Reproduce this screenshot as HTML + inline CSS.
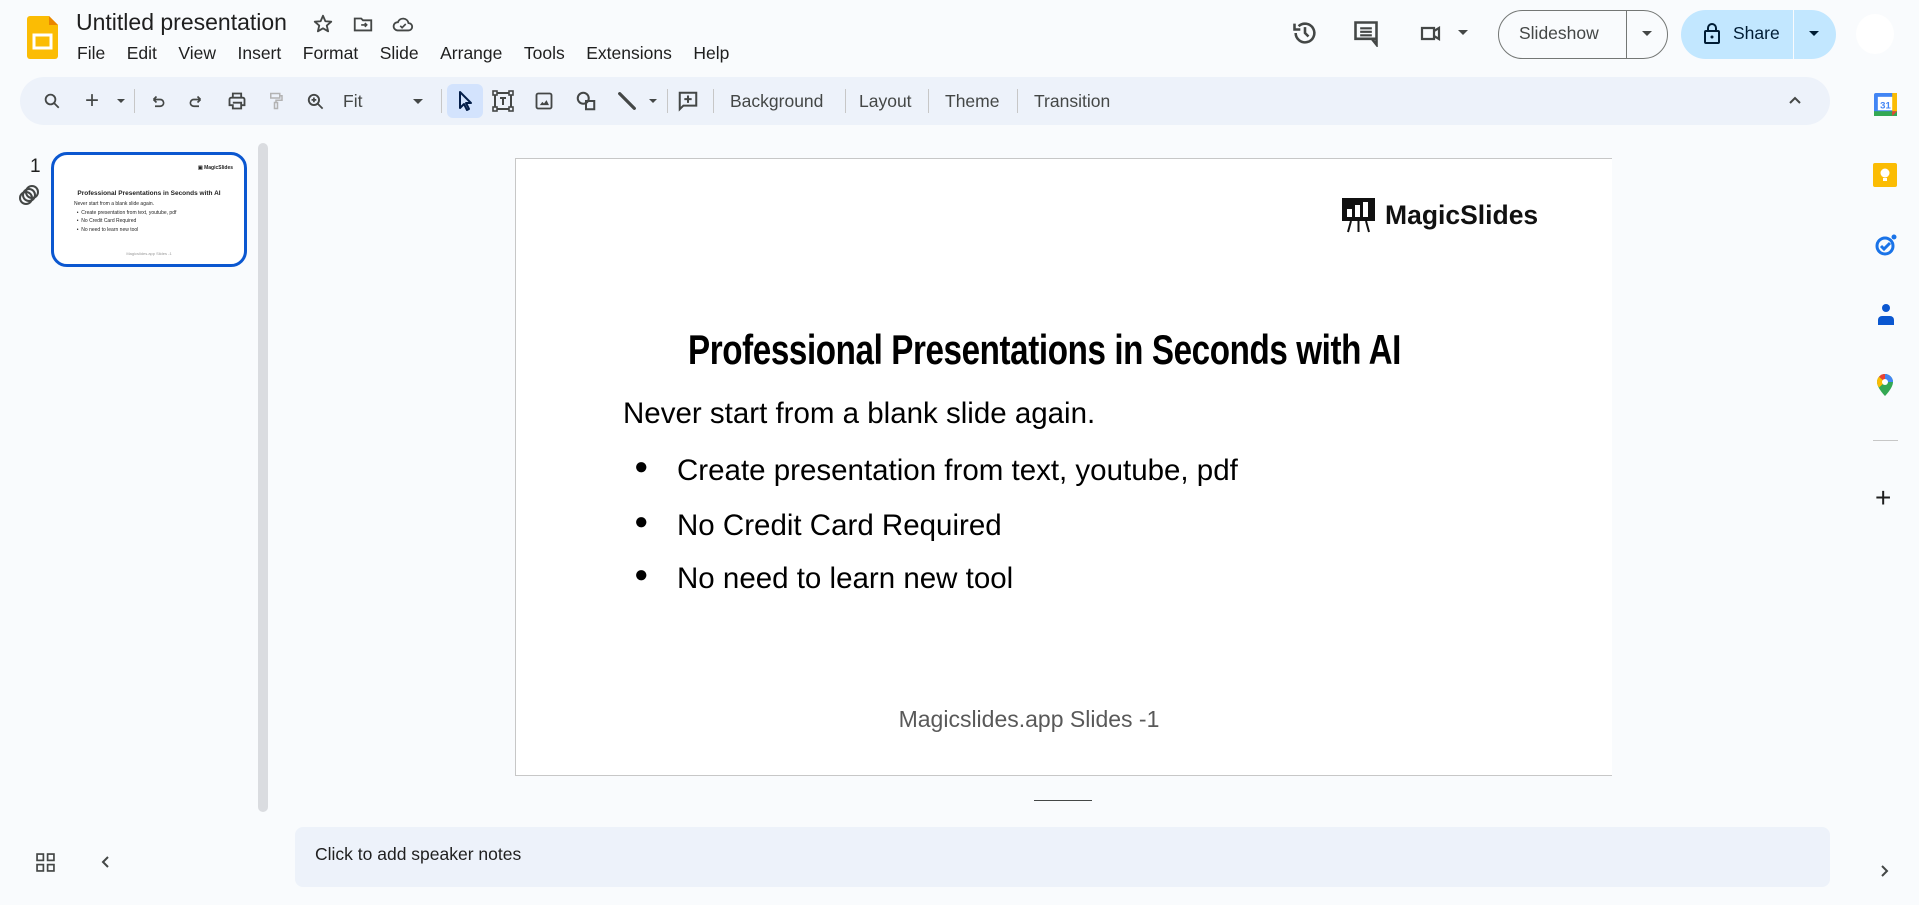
<!DOCTYPE html>
<html><head><meta charset="utf-8"><style>
*{box-sizing:border-box;margin:0;padding:0}
body{width:1919px;height:905px;background:#f9fbfd;font-family:"Liberation Sans",Arial,sans-serif;color:#1f1f1f;position:relative;overflow:hidden}
.a{position:absolute}
.menu span{margin-right:21.5px}
.tb{position:absolute;left:20px;top:77px;width:1810px;height:48px;background:#edf2fa;border-radius:24px}
.tb .t{position:absolute;top:0;line-height:48px;font-size:17.5px;color:#444746}
.sep{position:absolute;top:12px;width:1px;height:24px;background:#c7c7c7}
.ic{position:absolute}
</style></head><body>
<svg class="a" style="left:27px;top:16px" width="31" height="43" viewBox="0 0 31 43"><path d="M3 0h19l9 9v31a3 3 0 0 1-3 3H3a3 3 0 0 1-3-3V3a3 3 0 0 1 3-3z" fill="#fbbc04"/><path d="M22 0l9 9h-9z" fill="#ea8600"/><rect x="7" y="19" width="17" height="13" fill="none" stroke="#fff" stroke-width="3"/></svg>
<div class="a" style="left:76px;top:9px;font-size:23px;color:#1f1f1f">Untitled presentation</div>
<svg class="a" style="left:312px;top:13px" width="22" height="22" viewBox="0 0 24 24"><path d="M12 3l2.6 6 6.4.5-4.9 4.2 1.5 6.3L12 16.7 6.4 20l1.5-6.3L3 9.5 9.4 9z" fill="none" stroke="#444746" stroke-width="2" stroke-linejoin="round"/></svg>
<svg class="a" style="left:352px;top:13px" width="22" height="22" viewBox="0 0 24 24"><path d="M3 6h7l2 2h9v11H3z" fill="none" stroke="#444746" stroke-width="2"/><path d="M10 13h6m-2-2l2 2-2 2" stroke="#444746" stroke-width="1.8" fill="none"/></svg>
<svg class="a" style="left:391px;top:13px" width="24" height="22" viewBox="0 0 24 24"><path d="M6 19h12a4 4 0 0 0 0-8 6 6 0 0 0-11.5-1A4.5 4.5 0 0 0 6 19z" fill="none" stroke="#444746" stroke-width="2"/><path d="M9 14l2 2 4-4" fill="none" stroke="#444746" stroke-width="1.8"/></svg>
<div class="a menu" style="left:77px;top:43px;font-size:17.5px;color:#1f1f1f;white-space:nowrap"><span>File</span><span>Edit</span><span>View</span><span>Insert</span><span>Format</span><span>Slide</span><span>Arrange</span><span>Tools</span><span>Extensions</span><span>Help</span></div>

<svg class="a" style="left:1291px;top:19px" width="28" height="28" viewBox="0 0 24 24"><path d="M4 12a8 8 0 1 0 2.5-5.8" fill="none" stroke="#444746" stroke-width="2.2"/><path d="M3 4v5h5" fill="none" stroke="#444746" stroke-width="2.2"/><path d="M12 7v5l3 3" fill="none" stroke="#444746" stroke-width="2.2"/></svg>
<svg class="a" style="left:1352px;top:19px" width="28" height="28" viewBox="0 0 24 24"><path d="M3 3h18v14H7l4 0 10 0v5l-4-5H3z" fill="none" stroke="#444746" stroke-width="2.2"/><path d="M7 8h10M7 11h10M7 14h10" stroke="#444746" stroke-width="1.8"/></svg>
<svg class="a" style="left:1418px;top:21px" width="26" height="24" viewBox="0 0 24 24"><path d="M3 7h12v11H3zM15 10l5-3v11l-5-3" fill="none" stroke="#444746" stroke-width="2.2"/></svg>
<div class="a" style="left:1458px;top:30px;border:5px solid transparent;border-top-color:#444746;border-bottom:0"></div>
<div class="a" style="left:1498px;top:10px;width:170px;height:49px;border:1px solid #747775;border-radius:25px"></div>
<div class="a" style="left:1626px;top:10px;width:1px;height:49px;background:#747775"></div>
<div class="a" style="left:1519px;top:23px;font-size:17.5px;color:#444746">Slideshow</div>
<div class="a" style="left:1642px;top:31px;border:5px solid transparent;border-top-color:#444746;border-bottom:0"></div>
<div class="a" style="left:1681px;top:10px;width:155px;height:49px;background:#c2e7ff;border-radius:25px"></div>
<div class="a" style="left:1793px;top:10px;width:1px;height:49px;background:#f9fbfd"></div>
<svg class="a" style="left:1702px;top:21px" width="20" height="24" viewBox="0 0 20 24"><rect x="3" y="10" width="14" height="12" rx="1" fill="none" stroke="#001d35" stroke-width="2"/><path d="M6 10V7a4 4 0 0 1 8 0v3" fill="none" stroke="#001d35" stroke-width="2"/><circle cx="10" cy="16" r="1.5" fill="#001d35"/></svg>
<div class="a" style="left:1733px;top:23px;font-size:17.5px;color:#001d35">Share</div>
<div class="a" style="left:1809px;top:31px;border:5px solid transparent;border-top-color:#001d35;border-bottom:0"></div>
<div class="a" style="left:1856px;top:14px;width:38px;height:40px;border-radius:50%;background:#fff"></div>

<div class="tb">
<svg class="ic" style="left:23px;top:15px" width="18" height="18" viewBox="0 0 24 24"><circle cx="10" cy="10" r="6.5" fill="none" stroke="#444746" stroke-width="2.4"/><path d="M15 15l6 6" stroke="#444746" stroke-width="2.4"/></svg>
<div class="t" style="left:65px;font-size:24px;color:#444746">+</div>
<div class="ic" style="left:97px;top:22px;border:4px solid transparent;border-top-color:#444746;border-bottom:0"></div>
<div class="sep" style="left:114px"></div>
<svg class="ic" style="left:129px;top:15px" width="18" height="18" viewBox="0 0 24 24"><path d="M6 10h9a4.5 4.5 0 0 1 0 9H8M6 10l4-4M6 10l4 4" fill="none" stroke="#444746" stroke-width="2.2"/></svg>
<svg class="ic" style="left:167px;top:15px" width="18" height="18" viewBox="0 0 24 24"><path d="M18 10H9a4.5 4.5 0 0 0 0 9h7M18 10l-4-4M18 10l-4 4" fill="none" stroke="#444746" stroke-width="2.2"/></svg>
<svg class="ic" style="left:207px;top:14px" width="20" height="20" viewBox="0 0 24 24"><path d="M7 8V3h10v5M5 8h14a2 2 0 0 1 2 2v7h-4v4H7v-4H3v-7a2 2 0 0 1 2-2zM7 14h10v7" fill="none" stroke="#444746" stroke-width="2.2"/></svg>
<svg class="ic" style="left:247px;top:14px" width="18" height="20" viewBox="0 0 24 24"><path d="M5 2h12v6H5zM17 5h3v6h-8v3M10 14h4v8h-4z" fill="none" stroke="#b3b3b3" stroke-width="2"/></svg>
<svg class="ic" style="left:286px;top:15px" width="19" height="19" viewBox="0 0 24 24"><circle cx="10" cy="10" r="6.5" fill="none" stroke="#444746" stroke-width="2.4"/><path d="M15 15l6 6M10 7v6M7 10h6" stroke="#444746" stroke-width="2.2"/></svg>
<div class="t" style="left:323px">Fit</div>
<div class="ic" style="left:393px;top:22px;border:5px solid transparent;border-top-color:#444746;border-bottom:0"></div>
<div class="sep" style="left:421px"></div>
<div class="ic" style="left:427px;top:7px;width:36px;height:34px;border-radius:6px;background:#d3e3fd"></div>
<svg class="ic" style="left:436px;top:13px" width="18" height="22" viewBox="0 0 18 22"><path d="M4 2v16l4-4 3 6 2-1-3-6h5z" fill="none" stroke="#041e49" stroke-width="2" stroke-linejoin="round"/></svg>
<svg class="ic" style="left:471px;top:12px" width="24" height="24" viewBox="0 0 24 24"><rect x="4" y="4" width="16" height="16" fill="none" stroke="#444746" stroke-width="2"/><rect x="2" y="2" width="4" height="4" fill="#edf2fa" stroke="#444746" stroke-width="1.6"/><rect x="18" y="2" width="4" height="4" fill="#edf2fa" stroke="#444746" stroke-width="1.6"/><rect x="2" y="18" width="4" height="4" fill="#edf2fa" stroke="#444746" stroke-width="1.6"/><rect x="18" y="18" width="4" height="4" fill="#edf2fa" stroke="#444746" stroke-width="1.6"/><path d="M9 9h6M12 9v7" stroke="#444746" stroke-width="2"/></svg>
<svg class="ic" style="left:514px;top:14px" width="20" height="20" viewBox="0 0 24 24"><rect x="3" y="3" width="18" height="18" rx="2" fill="none" stroke="#444746" stroke-width="2.2"/><path d="M7 17l3-4 2 2 3-4 3 6z" fill="#444746"/></svg>
<svg class="ic" style="left:555px;top:13px" width="22" height="22" viewBox="0 0 24 24"><circle cx="9" cy="9" r="6" fill="none" stroke="#444746" stroke-width="2.2"/><path d="M12 12h9v9h-9z" fill="none" stroke="#444746" stroke-width="2.2"/></svg>
<svg class="ic" style="left:596px;top:13px" width="22" height="22" viewBox="0 0 24 24"><path d="M4 4l16 16" stroke="#444746" stroke-width="3.5" stroke-linecap="round"/></svg>
<div class="ic" style="left:629px;top:22px;border:4px solid transparent;border-top-color:#444746;border-bottom:0"></div>
<div class="sep" style="left:647px"></div>
<svg class="ic" style="left:657px;top:13px" width="22" height="22" viewBox="0 0 24 24"><path d="M3 3h18v14H7l-4 4z" fill="none" stroke="#444746" stroke-width="2.2"/><path d="M12 6v8M8 10h8" stroke="#444746" stroke-width="2.2"/></svg>
<div class="sep" style="left:693px"></div>
<div class="t" style="left:710px">Background</div>
<div class="sep" style="left:825px"></div>
<div class="t" style="left:839px">Layout</div>
<div class="sep" style="left:908px"></div>
<div class="t" style="left:925px">Theme</div>
<div class="sep" style="left:997px"></div>
<div class="t" style="left:1014px">Transition</div>
<svg class="ic" style="left:1768px;top:17px" width="14" height="14" viewBox="0 0 14 14"><path d="M2 9l5-5 5 5" fill="none" stroke="#444746" stroke-width="2"/></svg>
</div>

<svg class="a" style="left:1874px;top:93px" width="23" height="23" viewBox="0 0 24 24"><rect x="0" y="0" width="24" height="24" rx="2" fill="#4285f4"/><rect x="4" y="4" width="16" height="14" fill="#fff"/><rect x="0" y="19" width="24" height="5" fill="#34a853"/><rect x="19" y="0" width="5" height="19" fill="#fbbc04"/><path d="M19 19h5l-5 5z" fill="#ea4335"/><text x="12" y="16" font-size="10" font-family="Liberation Sans" font-weight="bold" fill="#4285f4" text-anchor="middle">31</text></svg>
<svg class="a" style="left:1873px;top:163px" width="24" height="24" viewBox="0 0 24 24"><rect width="24" height="24" rx="2" fill="#fbbc04"/><circle cx="12" cy="10" r="4.5" fill="#fff"/><rect x="10" y="15" width="4" height="3" fill="#fff"/></svg>
<svg class="a" style="left:1874px;top:233px" width="24" height="24" viewBox="0 0 24 24"><circle cx="11" cy="13" r="8" fill="none" stroke="#1a73e8" stroke-width="3"/><path d="M7 13l3 3 6-6" fill="none" stroke="#1a73e8" stroke-width="3"/><circle cx="20" cy="4" r="2.5" fill="#1a73e8"/></svg>
<svg class="a" style="left:1876px;top:303px" width="20" height="24" viewBox="0 0 20 24"><circle cx="10" cy="5" r="4" fill="#0b57d0"/><path d="M2 22v-5a4 4 0 0 1 4-4h8a4 4 0 0 1 4 4v5z" fill="#0b57d0"/></svg>
<svg class="a" style="left:1876px;top:373px" width="18" height="24" viewBox="0 0 18 24"><path d="M9 1a8 8 0 0 0-8 8c0 6 8 14 8 14s8-8 8-14a8 8 0 0 0-8-8z" fill="#34a853"/><path d="M9 1a8 8 0 0 0-6 2.7L9 9z" fill="#ea4335"/><path d="M3 3.7A8 8 0 0 0 1 9c0 2 1 4 2 5.5L9 9z" fill="#fbbc04"/><path d="M9 1a8 8 0 0 1 8 8L9 9z" fill="#4285f4"/><circle cx="9" cy="9" r="3" fill="#fff"/></svg>
<div class="a" style="left:1873px;top:440px;width:25px;height:1px;background:#c7c7c7"></div>
<div class="a" style="left:1875px;top:484px;font-size:28px;line-height:28px;color:#1f1f1f">+</div>
<svg class="a" style="left:1879px;top:864px" width="12" height="14" viewBox="0 0 12 14"><path d="M3 2l5 5-5 5" fill="none" stroke="#444746" stroke-width="2"/></svg>

<div class="a" style="left:30px;top:156px;font-size:19px;color:#1f1f1f">1</div>
<svg class="a" style="left:17px;top:184px" width="24" height="22" viewBox="0 0 24 22"><circle cx="9" cy="14" r="6" fill="none" stroke="#444746" stroke-width="2"/><circle cx="12" cy="11" r="6" fill="none" stroke="#444746" stroke-width="2"/><circle cx="15" cy="8" r="6" fill="none" stroke="#444746" stroke-width="2"/></svg>
<div class="a" style="left:51px;top:152px;width:196px;height:115px;border:3px solid #0b57d0;border-radius:16px;background:#fff;overflow:hidden">
 <div class="a" style="left:144px;top:10px;font-size:5px;font-weight:bold">▣ MagicSlides</div>
 <div class="a" style="left:0;width:190px;top:35px;text-align:center;font-size:6.5px;font-weight:bold">Professional Presentations in Seconds with AI</div>
 <div class="a" style="left:20px;top:45px;font-size:5px;line-height:8.5px">Never start from a blank slide again.<br>&nbsp;&nbsp;•&nbsp;&nbsp;Create presentation from text, youtube, pdf<br>&nbsp;&nbsp;•&nbsp;&nbsp;No Credit Card Required<br>&nbsp;&nbsp;•&nbsp;&nbsp;No need to learn new tool</div>
 <div class="a" style="left:0;width:190px;top:96px;text-align:center;font-size:4px;color:#999">Magicslides.app Slides -1</div>
</div>
<div class="a" style="left:258px;top:143px;width:10px;height:669px;background:#dadce0;border-radius:5px"></div>
<svg class="a" style="left:36px;top:853px" width="19" height="19" viewBox="0 0 18 18"><rect x="1" y="1" width="6" height="6" fill="none" stroke="#444746" stroke-width="1.6"/><rect x="11" y="1" width="6" height="6" fill="none" stroke="#444746" stroke-width="1.6"/><rect x="1" y="11" width="6" height="6" fill="none" stroke="#444746" stroke-width="1.6"/><rect x="11" y="11" width="6" height="6" fill="none" stroke="#444746" stroke-width="1.6"/></svg>
<svg class="a" style="left:99px;top:855px" width="12" height="14" viewBox="0 0 12 14"><path d="M9 2L4 7l5 5" fill="none" stroke="#444746" stroke-width="2"/></svg>

<div class="a" style="left:515px;top:158px;width:1097px;height:618px;background:#fff;border:1px solid #c7c7c7;border-right:none"></div>
<svg class="a" style="left:1341px;top:197px" width="35" height="36" viewBox="0 0 35 36"><rect x="1" y="1" width="33" height="23" fill="#111"/><rect x="6" y="12" width="5" height="8" fill="#fff"/><rect x="14" y="8" width="5" height="12" fill="#fff"/><rect x="22" y="5" width="5" height="15" fill="#fff"/><path d="M10 24l-3 11M17.5 24v11M25 24l3 11" stroke="#111" stroke-width="2"/></svg>
<div class="a" style="left:1385px;top:200px;font-size:26.5px;font-weight:bold;color:#111">MagicSlides</div>
<div class="a" style="left:688px;top:326px;width:712px;height:50px;overflow:visible;white-space:nowrap">
 <span style="display:inline-block;font-size:42px;font-weight:bold;color:#000;transform:scaleX(0.79);transform-origin:left top;letter-spacing:-0.5px">Professional Presentations in Seconds with AI</span>
</div>
<div class="a" style="left:623px;top:397px;font-size:29.5px;color:#000">Never start from a blank slide again.</div>
<div class="a" style="left:634px;top:453px;font-size:24px;color:#000">●</div>
<div class="a" style="left:677px;top:454px;font-size:29.5px;color:#000">Create presentation from text, youtube, pdf</div>
<div class="a" style="left:634px;top:508px;font-size:24px;color:#000">●</div>
<div class="a" style="left:677px;top:509px;font-size:29.5px;color:#000">No Credit Card Required</div>
<div class="a" style="left:634px;top:561px;font-size:24px;color:#000">●</div>
<div class="a" style="left:677px;top:562px;font-size:29.5px;color:#000">No need to learn new tool</div>
<div class="a" style="left:515px;width:1028px;top:706px;text-align:center;font-size:23px;color:#595959">Magicslides.app Slides -1</div>
<div class="a" style="left:1034px;top:800px;width:58px;height:1px;background:#444746"></div>

<div class="a" style="left:295px;top:827px;width:1535px;height:60px;background:#edf2fa;border-radius:8px"></div>
<div class="a" style="left:315px;top:844px;font-size:17.5px;color:#1f1f1f">Click to add speaker notes</div>
</body></html>
